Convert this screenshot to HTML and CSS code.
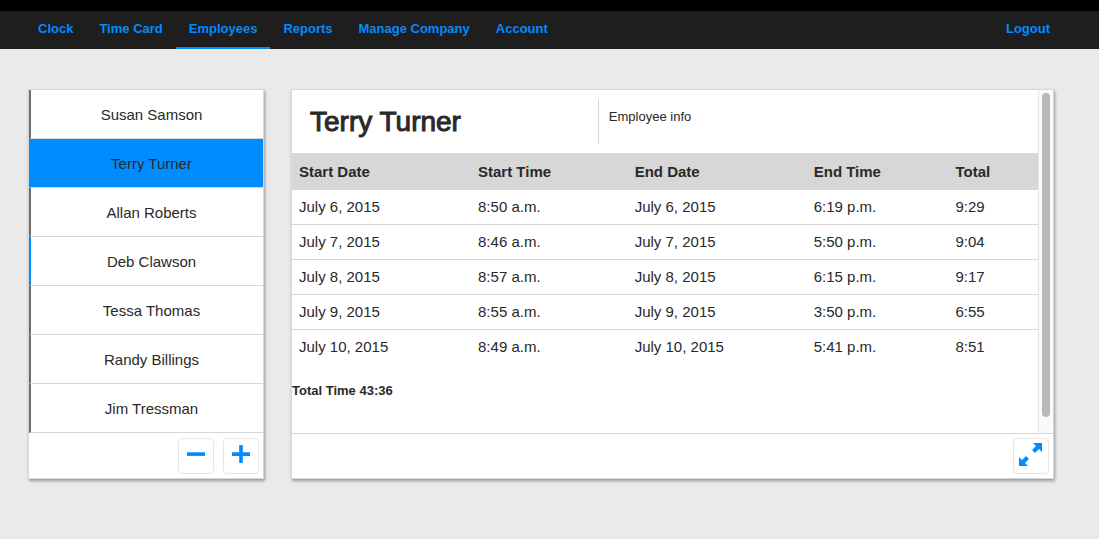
FILE: index.html
```html
<!DOCTYPE html>
<html lang="en">
<head>
<meta charset="utf-8">
<title>Employees</title>
<link rel="stylesheet" href="styles.css">
</head>
<body>
<header class="topbar">
  <nav class="nav">
    <a class="nav-link" href="#clock">Clock</a>
    <a class="nav-link" href="#time-card">Time Card</a>
    <a class="nav-link nav-link-active" href="#employees" aria-current="page">Employees</a>
    <a class="nav-link" href="#reports">Reports</a>
    <a class="nav-link" href="#manage">Manage Company</a>
    <a class="nav-link" href="#account">Account</a>
    <a class="nav-link nav-logout" href="#logout">Logout</a>
  </nav>
</header>
<main class="layout">
  <section class="panel" aria-label="Employees">
    <ul class="employees">
      <li><button class="employee" type="button">Susan Samson</button></li>
      <li><button class="employee employee-selected" type="button">Terry Turner</button></li>
      <li><button class="employee" type="button">Allan Roberts</button></li>
      <li><button class="employee employee-clocked-in" type="button">Deb Clawson</button></li>
      <li><button class="employee" type="button">Tessa Thomas</button></li>
      <li><button class="employee" type="button">Randy Billings</button></li>
      <li><button class="employee" type="button">Jim Tressman</button></li>
    </ul>
    <div class="panel-footer">
      <button class="icon-button" type="button" aria-label="Remove employee">
        <svg class="icon" viewBox="0 0 24 24"><path d="M3 10.3h18v3.6H3z"/></svg>
      </button>
      <button class="icon-button" type="button" aria-label="Add employee">
        <svg class="icon" viewBox="0 0 24 24"><path d="M10.2 3h3.6v7.3H21v3.6h-7.2V21h-3.6v-7.1H3v-3.6h7.2z"/></svg>
      </button>
    </div>
  </section>
  <section class="panel" aria-label="Time card">
    <div class="panel-body">
      <div class="content">
        <div class="profile">
          <h1 class="name">Terry Turner</h1>
          <p class="info">Employee info</p>
        </div>
        <table class="times">
          <thead>
            <tr>
              <th class="col-date">Start Date</th>
              <th class="col-start">Start Time</th>
              <th class="col-date">End Date</th>
              <th class="col-end">End Time</th>
              <th>Total</th>
            </tr>
          </thead>
          <tbody>
            <tr><td>July 6, 2015</td><td>8:50 a.m.</td><td>July 6, 2015</td><td>6:19 p.m.</td><td>9:29</td></tr>
            <tr><td>July 7, 2015</td><td>8:46 a.m.</td><td>July 7, 2015</td><td>5:50 p.m.</td><td>9:04</td></tr>
            <tr><td>July 8, 2015</td><td>8:57 a.m.</td><td>July 8, 2015</td><td>6:15 p.m.</td><td>9:17</td></tr>
            <tr><td>July 9, 2015</td><td>8:55 a.m.</td><td>July 9, 2015</td><td>3:50 p.m.</td><td>6:55</td></tr>
            <tr><td>July 10, 2015</td><td>8:49 a.m.</td><td>July 10, 2015</td><td>5:41 p.m.</td><td>8:51</td></tr>
          </tbody>
        </table>
        <p class="total">Total Time 43:36</p>
      </div>
      <div class="scroll-track" aria-hidden="true"><div class="scroll-thumb"></div></div>
    </div>
    <div class="panel-footer panel-footer-ruled">
      <button class="icon-button" type="button" aria-label="Expand">
        <svg class="icon" viewBox="0 0 24 24"><path d="M14 1h9v9l-3-3-4 4-3-3 4-4zM9 24H0v-9l3 3 4-4 3 3-4 4z"/></svg>
      </button>
    </div>
  </section>
</main>
</body>
</html>
```
FILE: styles.css
```css
* {
  box-sizing: border-box;
}

body {
  margin: 0;
  background: #eaeaea;
  color: #292929;
  font-family: "Liberation Sans", Arial, sans-serif;
  font-size: 15px;
}

.topbar {
  border-top: 11px solid #000;
  background: #1e1e1e;
}

.nav {
  display: flex;
  padding: 0 36px 0 25px;
}

.nav-link {
  padding: 8px 13px;
  border-bottom: 2px solid transparent;
  color: #008cff;
  font-size: 13px;
  font-weight: bold;
  line-height: 20px;
  text-decoration: none;
}

.nav-link-active {
  border-bottom-color: #008cff;
}

.nav-logout {
  margin-left: auto;
}

.layout {
  display: grid;
  grid-template-columns: 236px 1fr;
  gap: 27px;
  padding: 40px 45px 40px 28px;
}

.panel {
  display: flex;
  flex-direction: column;
  min-width: 0;
  border: 1px solid #d7d7d7;
  background: #fff;
  box-shadow: 1px 2px 3px rgba(0, 0, 0, 0.35);
}

.employees {
  margin: 0;
  padding: 0;
  list-style: none;
}

.employee {
  display: block;
  width: 100%;
  padding: 13px 0 11px 9px;
  border: 0 solid #d7d7d7;
  border-bottom-width: 1px;
  border-left: 2px solid #6c6c6c;
  background: #fff;
  color: inherit;
  font: inherit;
  line-height: 24px;
}

.employee-selected {
  border-left-color: #008cff;
  background: #008cff;
}

.employee-clocked-in {
  border-left-color: #008cff;
}

.panel-footer {
  display: flex;
  justify-content: flex-end;
  gap: 9px;
  padding: 5px 4px 4px;
}

.panel-footer-ruled {
  padding-top: 4px;
  border-top: 1px solid #d7d7d7;
}

.icon-button {
  display: flex;
  align-items: flex-start;
  justify-content: center;
  width: 36px;
  height: 36px;
  padding: 3px 0;
  border: 1px solid #e6e6e6;
  border-radius: 4px;
  background: #fff;
}

.icon {
  width: 24px;
  height: 24px;
  fill: #008cff;
}

.panel-body {
  display: flex;
  flex: 1;
}

.content {
  flex: 1;
}

.profile {
  display: flex;
  align-items: flex-start;
  padding: 9px 0;
}

.name {
  flex: 0 0 41%;
  margin: 0;
  padding-left: 18px;
  font-size: 28px;
  font-weight: 500;
  line-height: 45px;
  -webkit-text-stroke: 1px;
}

.info {
  flex: 1;
  height: 45px;
  margin: 0;
  padding: 8px 10px;
  border-left: 1px solid #d7d7d7;
  font-size: 13px;
  line-height: 20px;
}

.times {
  width: 100%;
  border-collapse: separate;
  border-spacing: 0;
  table-layout: fixed;
  text-align: left;
}

.times th {
  padding: 9px 7px 8px;
  background: #d7d7d7;
  line-height: 20px;
}

.times td {
  padding: 7px;
  border-bottom: 1px solid #d7d7d7;
  line-height: 20px;
}

.times tr:last-child td {
  border-bottom: 0;
}

.col-date {
  width: 24%;
}

.col-start {
  width: 21%;
}

.col-end {
  width: 19%;
}

.total {
  margin: 17px 0 0;
  font-size: 13px;
  font-weight: bold;
  line-height: 20px;
}

.scroll-track {
  display: flex;
  width: 15px;
  padding: 3px;
  border-left: 1px solid #e7e7e7;
  background: #fafafa;
}

.scroll-thumb {
  width: 8px;
  height: 96%;
  border-radius: 4px;
  background: #b8b8b8;
}
```
